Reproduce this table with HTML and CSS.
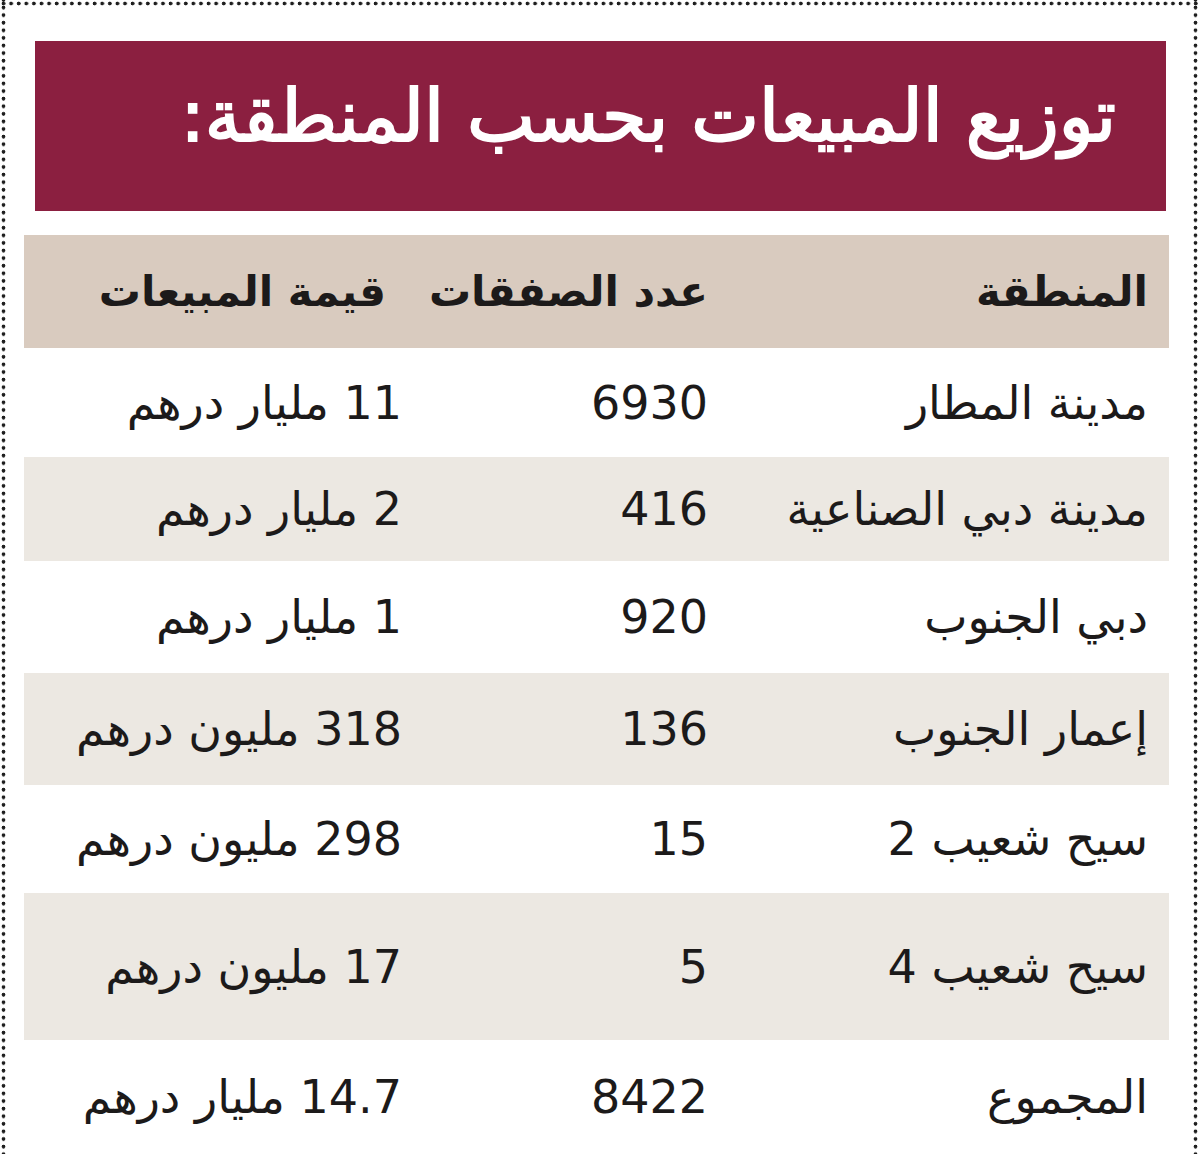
FILE: index.html
```html
<!DOCTYPE html>
<html lang="ar" dir="rtl">
<head>
<meta charset="utf-8">
<title>توزيع المبيعات بحسب المنطقة</title>
<link rel="stylesheet" href="styles.css">
</head>
<body>
<div class="frame">
  <div class="title-bar">
    <h1 class="title">توزيع المبيعات بحسب المنطقة:</h1>
  </div>
  <div class="sales-table">
    <div class="row head">
      <div class="cell c1">المنطقة</div>
      <div class="cell c2">عدد الصفقات</div>
      <div class="cell c3">قيمة المبيعات</div>
    </div>
    <div class="row r1">
      <div class="cell c1">مدينة المطار</div>
      <div class="cell c2 num">6930</div>
      <div class="cell c3">11 مليار درهم</div>
    </div>
    <div class="row r2 shade">
      <div class="cell c1">مدينة دبي الصناعية</div>
      <div class="cell c2 num">416</div>
      <div class="cell c3">2 مليار درهم</div>
    </div>
    <div class="row r3">
      <div class="cell c1">دبي الجنوب</div>
      <div class="cell c2 num">920</div>
      <div class="cell c3">1 مليار درهم</div>
    </div>
    <div class="row r4 shade">
      <div class="cell c1">إعمار الجنوب</div>
      <div class="cell c2 num">136</div>
      <div class="cell c3">318 مليون درهم</div>
    </div>
    <div class="row r5">
      <div class="cell c1">سيح شعيب 2</div>
      <div class="cell c2 num">15</div>
      <div class="cell c3">298 مليون درهم</div>
    </div>
    <div class="row r6 shade">
      <div class="cell c1">سيح شعيب 4</div>
      <div class="cell c2 num">5</div>
      <div class="cell c3">17 مليون درهم</div>
    </div>
    <div class="row r7">
      <div class="cell c1">المجموع</div>
      <div class="cell c2 num">8422</div>
      <div class="cell c3">14.7 مليار درهم</div>
    </div>
  </div>
</div>
</body>
</html>
```

FILE: styles.css
```css
html, body {
  margin: 0;
  padding: 0;
  background: #ffffff;
}
body {
  width: 1200px;
  height: 1154px;
  overflow: hidden;
  font-family: "DejaVu Sans", "Noto Sans", sans-serif;
  color: #1c1a1a;
}
.frame {
  box-sizing: border-box;
  width: 1200px;
  height: 1170px;
  margin: 0;
  padding: 41px 34px 0 24px;
  direction: rtl;
  background:
    radial-gradient(circle at 3.5px 3.5px, #1e1e1e 1.6px, transparent 2.2px) 0 0 / 7.6px 7px repeat-x,
    radial-gradient(circle at 3.5px 3.5px, #1e1e1e 1.6px, transparent 2.2px) 0 4px / 7px 7.6px repeat-y,
    radial-gradient(circle at 3.5px 3.5px, #1e1e1e 1.6px, transparent 2.2px) 1192px 4px / 7px 7.6px repeat-y,
    #ffffff;
}
.title-bar {
  box-sizing: border-box;
  height: 170px;
  margin: 0 0 24px 11px;
  background: #8b1f40;
  display: flex;
  align-items: center;
  padding: 0 50px 20px 0;
}
.title {
  margin: 0;
  color: #ffffff;
  font-size: 72px;
  font-weight: normal;
  line-height: 1;
  white-space: nowrap;
  -webkit-text-stroke: 2px #ffffff;
}
.sales-table {
  width: 1145px;
  margin-right: -3px;
}
.row {
  display: grid;
  grid-template-columns: 440px 306px 399px;
  align-items: center;
}
.head { height: 113px; background: #d9cbbf; font-weight: bold; }
.r1 { height: 109px; }
.r2 { height: 104px; }
.r3 { height: 112px; }
.r4 { height: 112px; }
.r5 { height: 108px; }
.r6 { height: 147px; }
.r7 { height: 114px; }
.shade { background: #ece8e2; }
.cell {
  padding-right: 21px;
  text-align: right;
  font-size: 46px;
  line-height: 1;
  white-space: nowrap;
}
.head .cell { font-size: 42px; }
.head .c3 { padding-right: 37px; }
.num { font-size: 46px; }
```
